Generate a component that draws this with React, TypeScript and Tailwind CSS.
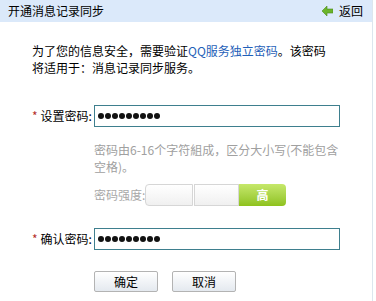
function Dots() {
  return (
    <div className="flex gap-[1px] pl-[3px]">
      {Array.from({ length: 9 }).map((_, i) => (
        <span key={i} className="block w-[6px] h-[6px] rounded-full bg-[#111]" />
      ))}
    </div>
  );
}

export default function App() {
  return (
    <div className="w-[376px] h-[301px] bg-white text-[12px] text-black font-['Noto_Sans_CJK_SC',sans-serif] overflow-hidden">
      <div className="w-[373px] h-full border-r border-[#dce6ee]">
        <div className="flex items-center justify-between h-[22px] bg-[#dbe9fa] pl-[8px] pr-[9px]">
          <span className="text-[12px] leading-[22px]">开通消息记录同步</span>
          <a className="flex items-center gap-[6px] leading-[22px]">
            <svg width="11" height="10" viewBox="0 0 11 10">
              <path d="M0 5 L5 0 L5 3 L11 3 L11 7 L5 7 L5 10 Z" fill="#6ab42a" stroke="#4a8a1a" strokeWidth="0.6" />
            </svg>
            <span>返回</span>
          </a>
        </div>

        <div className="pl-[32px] pt-[20px] leading-[17px] h-[54px]">
          <div>
            为了您的信息安全，需要验证<span className="text-[#1f5fb8]">QQ服务独立密码</span>。该密码
          </div>
          <div>将适用于：消息记录同步服务。</div>
        </div>

        <div className="flex items-center mt-[29px] pl-[32px] h-[22px]">
          <label className="flex w-[62px] items-center whitespace-nowrap">
            <span className="text-[#b5302a] mr-[3px]">*</span>设置密码:
          </label>
          <div className="w-[246px] h-[22px] border border-[#3e7f8e] flex items-center">
            <Dots />
          </div>
        </div>

        <div className="pl-[94px] mt-[14px] text-[#a0a0a0] leading-[17px] h-[35px]">
          <div>密码由6-16个字符組成，区分大小写(不能包含</div>
          <div>空格)。</div>
        </div>

        <div className="flex items-center pl-[94px] mt-[8px] h-[22px] text-[#a8a8a8]">
          <span className="w-[51px] whitespace-nowrap">密码强度:</span>
          <div className="flex h-[22px]">
            <div className="w-[48px] rounded-l-[4px] border border-[#d6d6d6] bg-gradient-to-b from-white to-[#f0f0f0]" />
            <div className="w-[45px] ml-[1px] border border-[#d6d6d6] bg-gradient-to-b from-white to-[#f0f0f0]" />
            <div className="w-[47px] rounded-r-[4px] bg-gradient-to-b from-[#c6e86a] to-[#8fc21a] text-white flex items-center justify-center font-bold">
              高
            </div>
          </div>
        </div>

        <div className="flex items-center mt-[22px] pl-[32px] h-[22px]">
          <label className="flex w-[62px] items-center whitespace-nowrap">
            <span className="text-[#b5302a] mr-[3px]">*</span>确认密码:
          </label>
          <div className="w-[246px] h-[22px] border border-[#3e7f8e] flex items-center">
            <Dots />
          </div>
        </div>

        <div className="flex gap-[14px] pl-[94px] mt-[21px]">
          <button className="w-[64px] h-[21px] rounded-[2px] border border-[#b3b3b3] bg-gradient-to-b from-white to-[#e4e9ef] text-[12px] leading-[19px]">
            确定
          </button>
          <button className="w-[64px] h-[21px] rounded-[2px] border border-[#b3b3b3] bg-gradient-to-b from-white to-[#e4e9ef] text-[12px] leading-[19px]">
            取消
          </button>
        </div>
      </div>
    </div>
  );
}
